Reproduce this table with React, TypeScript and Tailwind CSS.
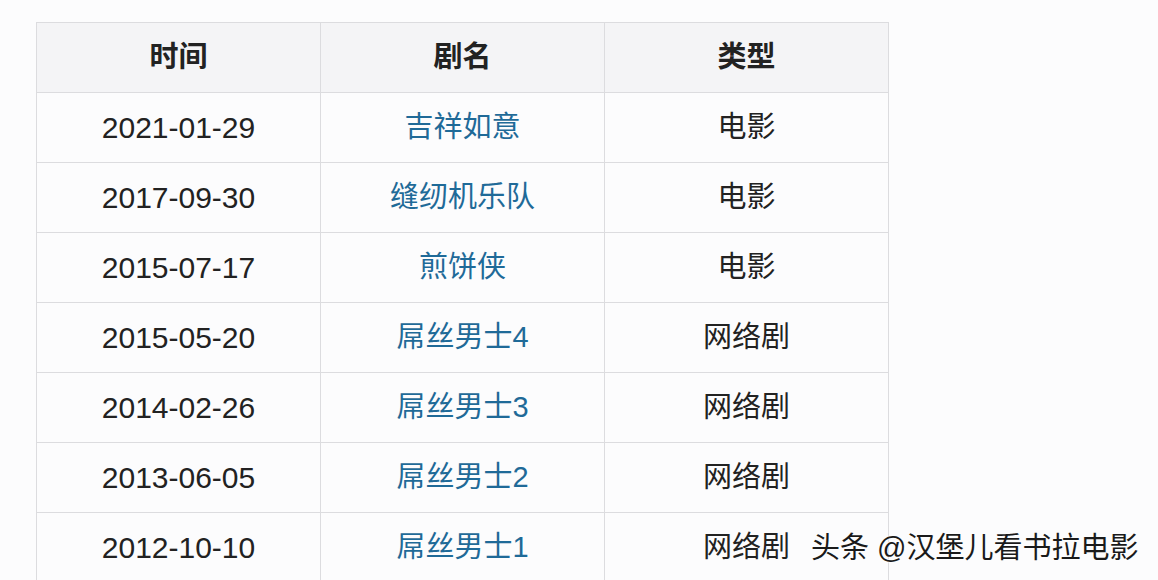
import React from "react";

const rows: [string, string, string][] = [
  ["2021-01-29", "吉祥如意", "电影"],
  ["2017-09-30", "缝纫机乐队", "电影"],
  ["2015-07-17", "煎饼侠", "电影"],
  ["2015-05-20", "屌丝男士4", "网络剧"],
  ["2014-02-26", "屌丝男士3", "网络剧"],
  ["2013-06-05", "屌丝男士2", "网络剧"],
  ["2012-10-10", "屌丝男士1", "网络剧"],
];

const font = {
  fontFamily: '"Liberation Sans", "Noto Sans CJK SC", sans-serif',
};

export default function App() {
  return (
    <div
      className="relative w-[1158px] h-[580px] overflow-hidden bg-[#fcfcfd] pl-[36px] pt-[22px]"
      style={font}
    >
      <div className="w-[853px] border-l border-t border-[#dcdcdf]">
        <div className="grid grid-cols-[284px_284px_284px] h-[70px] bg-[#f4f4f6]">
          {["时间", "剧名", "类型"].map((h) => (
            <div
              key={h}
              className="flex items-center justify-center border-r border-b border-[#dcdcdf] text-[29px] font-bold text-[#222]"
            >
              {h}
            </div>
          ))}
        </div>
        {rows.map((r) => (
          <div key={r[0]} className="grid grid-cols-[284px_284px_284px] h-[70px]">
            <div className="flex items-center justify-center border-r border-b border-[#dcdcdf] text-[30px] text-[#222]">
              {r[0]}
            </div>
            <div className="flex items-center justify-center border-r border-b border-[#dcdcdf] text-[29px] text-[#1f6a98]">
              {r[1]}
            </div>
            <div className="flex items-center justify-center border-r border-b border-[#dcdcdf] text-[29px] text-[#222]">
              {r[2]}
            </div>
          </div>
        ))}
      </div>
      <div
        className="absolute left-[811px] top-[527px] text-[29px] text-[#1a1a1a] whitespace-nowrap"
        style={{ textShadow: "0 0 2px #fff, 0 0 2px #fff, 0 0 1px #fff" }}
      >
        头条 @汉堡儿看书拉电影
      </div>
    </div>
  );
}
